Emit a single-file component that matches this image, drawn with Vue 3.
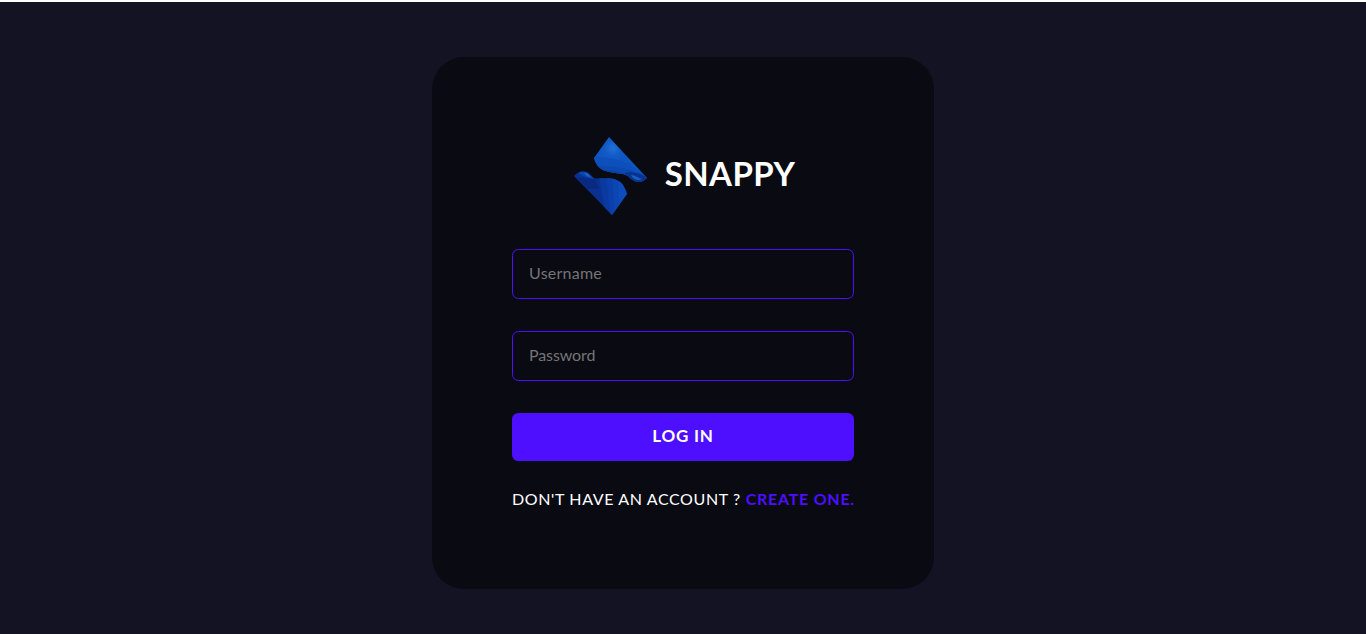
<script setup>
const title = 'SNAPPY'
</script>

<template>
  <div class="page">
    <div class="topline"></div>
    <div class="center">
      <form class="card" @submit.prevent>
        <div class="brand">
          <svg class="logo" viewBox="0 0 74 78" xmlns="http://www.w3.org/2000/svg" aria-hidden="true">
            <defs>
              <clipPath id="upClip">
                <path d="M36 0 L74 41 C71 43 69 45 66 45 C62 45 60 43 57 41 C54 38 51 37 47 36.500 C41 36 35 35 30 33 C26 31 22 26 21 21 Z" />
              </clipPath>
              <clipPath id="lowClip">
                <path d="M1 39 C3 37 5 35 8 34.500 C12 34 15 35 17 37 C19 39 20 41 22 41.500 C27 41.500 33 41 39 41.500 C44 42.500 48 45 50 48 C52 51 53 54 54 57 L39 78 Z" />
              </clipPath>
              <radialGradient id="glow" gradientUnits="userSpaceOnUse" cx="40" cy="11" r="13">
                <stop offset="0" stop-color="#2271d4" />
                <stop offset="0.6" stop-color="#125cc8" />
                <stop offset="1" stop-color="#0f56c2" />
              </radialGradient>
            </defs>
            <g clip-path="url(#upClip)">
              <rect width="74" height="78" fill="url(#glow)" />
              <path fill="#0d50bc" d="M20 20 C34 20 46 22 56 27 L76 42 L76 50 L20 50 Z" />
              <path fill="#0b48b0" d="M20 27 C34 30 48 29 60 34 L76 44 L76 50 L20 50 Z" />
              <path fill="#0a40a2" d="M26 32 C36 34 48 34 56 38 L62 50 L26 50 Z" />
              <path fill="#0a3290" d="M52 36 C60 33 68 37 76 41 L70 50 L58 50 Z" />
              <path fill="#1560c0" d="M58 38 C62 38 65 41 69 42 C66 44 60 43 58 38 Z" />
            </g>
            <g clip-path="url(#lowClip)">
              <rect width="74" height="78" fill="#0a3090" />
              <path fill="#0a399f" d="M26 40 L33 40 L39 80 L33 80 Z" />
              <path fill="#0b40ac" d="M33 40 L39 41 L43 80 L38 80 Z" />
              <path fill="#0c46b2" d="M39 41 L45 43 L48 80 L42 80 Z" />
              <path fill="#0d4cba" d="M45 43 L56 47 L58 80 L47 80 Z" />
              <path fill="#0a2a82" d="M0 40 L22 42 L26 52 L12 52 Z" />
              <path fill="#0c44ae" d="M5 36 C11 33 15 36 21 42 C14 41 10 39 5 36 Z" />
              <path fill="#1b66cf" d="M11 35.500 C14 35.500 16 38 18 40.500 C15 40 12 38 11 35.500 Z" />
            </g>
          </svg>
          <h1 class="name">{{ title }}</h1>
        </div>
        <input class="field field-user" type="text" placeholder="Username" name="username" />
        <input class="field field-pass" type="password" placeholder="Password" name="password" />
        <button class="submit" type="submit">LOG IN</button>
        <p class="note">DON'T HAVE AN ACCOUNT ? <a class="link" href="#">CREATE ONE.</a></p>
      </form>
    </div>
  </div>
</template>

<style>
html, body { margin: 0; background: #131324; }
</style>

<style scoped>
.page {
  width: 100%;
  height: 634px;
  display: flex;
  flex-direction: column;
  background: #131324;
  overflow: hidden;
}
.topline { height: 2px; background: #ffffff; flex: none; }
.center {
  flex: 1;
  display: flex;
  justify-content: center;
  padding-top: 55px;
}
.card {
  box-sizing: border-box;
  width: 502px;
  height: 532px;
  padding: 80px 80px 48px;
  border-radius: 32px;
  background: #0a0a13;
  display: flex;
  flex-direction: column;
  gap: 32px;
  font-family: Lato, "Liberation Sans", sans-serif;
}
.brand {
  height: 80px;
  display: flex;
  align-items: center;
  justify-content: center;
  gap: 18px;
  padding-left: 2px;
}
.logo { width: 74px; height: 78px; flex: none; margin-bottom: 3px; }
.name {
  margin: 0 0 9px;
  color: #fff;
  font-size: 33px;
  font-weight: 700;
  letter-spacing: 0.4px;
}
.field {
  box-sizing: border-box;
  height: 50px;
  width: 100%;
  padding: 0 16px 4px;
  border: 1px solid #4e0eff;
  border-radius: 6.4px;
  background: transparent;
  color: #fff;
  font: 400 16px Lato, "Liberation Sans", sans-serif;
  outline: none;
}
.field-user { letter-spacing: 0.25px; }
.field-pass { letter-spacing: -0.1px; }
.field::placeholder { color: #757575; opacity: 1; }
.submit {
  height: 48px;
  border: 0;
  padding: 0 0 3px;
  border-radius: 6.4px;
  background: #4e0eff;
  color: #fff;
  font: 700 17px Lato, "Liberation Sans", sans-serif;
  letter-spacing: 0.8px;
  cursor: pointer;
}
.note {
  margin: -2px 0 0;
  color: #fff;
  font-size: 16px;
  line-height: 16px;
  white-space: nowrap;
  letter-spacing: 0.63px;
}
.link { color: #4e0eff; font-weight: 700; text-decoration: none; letter-spacing: 0.75px; }
</style>
